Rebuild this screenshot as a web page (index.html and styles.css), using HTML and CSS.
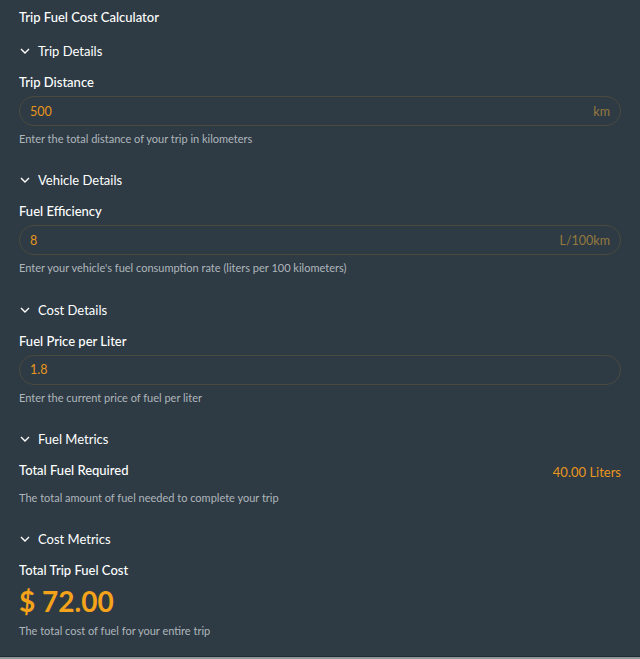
FILE: index.html
```html
<!DOCTYPE html>
<html lang="en">

<head>
    <meta charset="UTF-8">
    <meta name="viewport" content="width=device-width, initial-scale=1.0">
    <title>Trip Fuel Cost Calculator</title>
    <link rel="stylesheet" href="styles.css">
</head>

<body>
    <div class="page">
        <h1 class="title">Trip Fuel Cost Calculator</h1>

        <div class="section">
            <div class="section-header">
                <svg class="chevron" viewBox="0 0 12 12"><path d="M2 4l4 4 4-4" /></svg>
                <span>Trip Details</span>
            </div>
            <div class="label">Trip Distance</div>
            <div class="field">
                <input type="text" value="500">
                <span class="unit">km</span>
            </div>
            <div class="help">Enter the total distance of your trip in kilometers</div>
        </div>

        <div class="section">
            <div class="section-header">
                <svg class="chevron" viewBox="0 0 12 12"><path d="M2 4l4 4 4-4" /></svg>
                <span>Vehicle Details</span>
            </div>
            <div class="label">Fuel Efficiency</div>
            <div class="field">
                <input type="text" value="8">
                <span class="unit">L/100km</span>
            </div>
            <div class="help">Enter your vehicle's fuel consumption rate (liters per 100 kilometers)</div>
        </div>

        <div class="section">
            <div class="section-header">
                <svg class="chevron" viewBox="0 0 12 12"><path d="M2 4l4 4 4-4" /></svg>
                <span>Cost Details</span>
            </div>
            <div class="label">Fuel Price per Liter</div>
            <div class="field">
                <input type="text" value="1.8">
            </div>
            <div class="help">Enter the current price of fuel per liter</div>
        </div>

        <div class="section">
            <div class="section-header">
                <svg class="chevron" viewBox="0 0 12 12"><path d="M2 4l4 4 4-4" /></svg>
                <span>Fuel Metrics</span>
            </div>
            <div class="metric-row">
                <div class="label">Total Fuel Required</div>
                <div class="metric-value">40.00 Liters</div>
            </div>
            <div class="help">The total amount of fuel needed to complete your trip</div>
        </div>

        <div class="section">
            <div class="section-header">
                <svg class="chevron" viewBox="0 0 12 12"><path d="M2 4l4 4 4-4" /></svg>
                <span>Cost Metrics</span>
            </div>
            <div class="label">Total Trip Fuel Cost</div>
            <div class="big-value">$ 72.00</div>
            <div class="help">The total cost of fuel for your entire trip</div>
        </div>
    </div>
    <div class="scroll-edge"></div>
</body>

</html>
```

FILE: styles.css
```css
html, body {
    height: 100%;
}

body {
    margin: 0;
    background-color: #2e3b44;
    font-family: Lato, 'Open Sans', sans-serif;
    color: #ffffff;
    display: flex;
    flex-direction: column;
}

.page {
    flex: 1;
    padding: 7px 19px 0 19px;
}

.title {
    margin: 0 0 14px 0;
    font-size: 13px;
    font-weight: 500;
    line-height: 20px;
}

.section {
    margin-bottom: 24.25px;
}

.section:last-child {
    margin-bottom: 0;
}

.section-header {
    display: flex;
    align-items: center;
    height: 20px;
    font-size: 13px;
}

.chevron {
    width: 12px;
    height: 12px;
    margin: 0 7px 0 0;
    fill: none;
    stroke: #ffffff;
    stroke-width: 1.4;
}

.label {
    margin-top: 11px;
    font-size: 13px;
    font-weight: 500;
    line-height: 20px;
}

.field {
    display: flex;
    align-items: center;
    height: 28px;
    margin-top: 4px;
    padding: 0 10px;
    border: 1px solid #4a4a3e;
    border-radius: 15px;
}

.field input {
    flex: 1;
    min-width: 0;
    padding: 0;
    border: none;
    outline: none;
    background: transparent;
    font-family: inherit;
    font-size: 12.5px;
    color: #e8961c;
}

.unit {
    font-size: 12.5px;
    color: #95793f;
}

.help {
    margin-top: 6px;
    font-size: 11px;
    line-height: 14px;
    color: #aeb6bc;
}

.metric-row {
    display: flex;
    justify-content: space-between;
    align-items: flex-start;
    margin-bottom: 11px;
}

.metric-value {
    margin-top: 15px;
    font-size: 13px;
    line-height: 16px;
    color: #e8961c;
}

.big-value {
    margin-top: 6px;
    font-size: 28px;
    font-weight: 700;
    line-height: 30px;
    color: #f5a31a;
}

.big-value + .help {
    margin-top: 8px;
}

.scroll-edge {
    flex: none;
    height: 2px;
    border-top: 1px solid #1f2a31;
    background-color: #8d979c;
}
```
